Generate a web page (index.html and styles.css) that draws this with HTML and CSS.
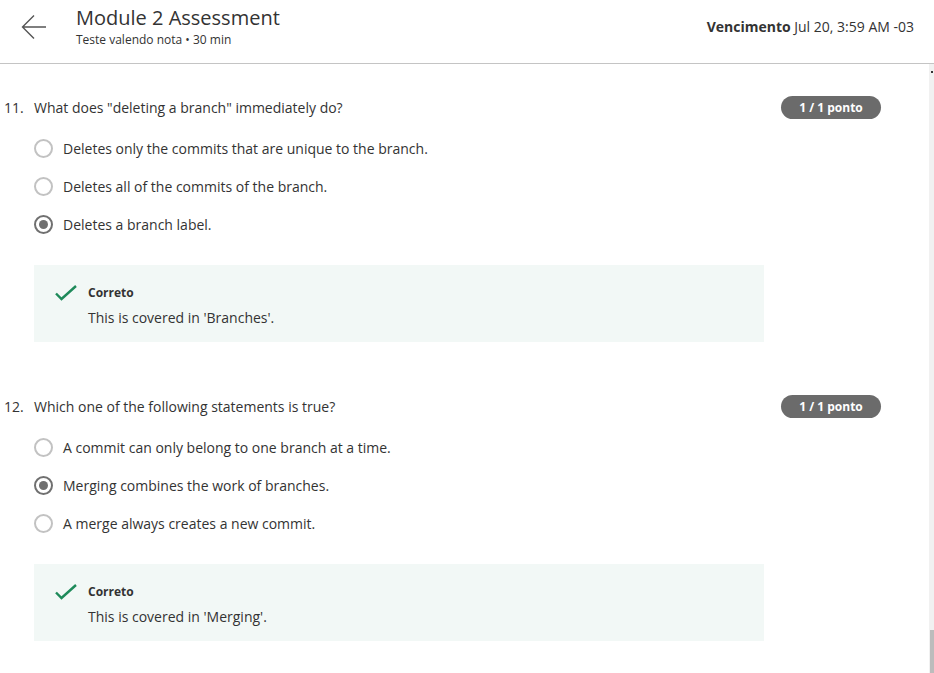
FILE: index.html
```html
<!DOCTYPE html>
<html lang="pt">
<head>
<meta charset="utf-8">
<title>Module 2 Assessment</title>
<link rel="stylesheet" href="styles.css">
</head>
<body>
<header class="topbar">
  <button class="back" aria-label="Voltar">
    <svg width="26" height="26" viewBox="0 0 26 26"><path d="M25 13H2M13 1.5L1.5 13L13 24.5" fill="none" stroke="#555" stroke-width="1.4"/></svg>
  </button>
  <div class="titles">
    <h1 class="title">Module 2 Assessment</h1>
    <div class="subtitle">Teste valendo nota • 30 min</div>
  </div>
  <div class="due"><b>Vencimento</b> Jul 20, 3:59 AM -03</div>
</header>
<div class="body">
  <main class="content">
    <section class="question">
      <div class="qrow">
        <span class="qnum">11.</span>
        <span class="qtext">What does "deleting a branch" immediately do?</span>
        <span class="badge">1 / 1 ponto</span>
      </div>
      <ul class="options">
        <li class="option"><span class="radio"></span>Deletes only the commits that are unique to the branch.</li>
        <li class="option"><span class="radio"></span>Deletes all of the commits of the branch.</li>
        <li class="option"><span class="radio checked"></span>Deletes a branch label.</li>
      </ul>
      <div class="feedback">
        <svg class="check" width="22" height="16" viewBox="0 0 22 16"><path d="M1 8.5L6.5 14L21 1" fill="none" stroke="#1e8a5a" stroke-width="2.4"/></svg>
        <div>
          <div class="fb-title">Correto</div>
          <div class="fb-text">This is covered in 'Branches'.</div>
        </div>
      </div>
    </section>
    <section class="question">
      <div class="qrow">
        <span class="qnum">12.</span>
        <span class="qtext">Which one of the following statements is true?</span>
        <span class="badge">1 / 1 ponto</span>
      </div>
      <ul class="options">
        <li class="option"><span class="radio"></span>A commit can only belong to one branch at a time.</li>
        <li class="option"><span class="radio checked"></span>Merging combines the work of branches.</li>
        <li class="option"><span class="radio"></span>A merge always creates a new commit.</li>
      </ul>
      <div class="feedback">
        <svg class="check" width="22" height="16" viewBox="0 0 22 16"><path d="M1 8.5L6.5 14L21 1" fill="none" stroke="#1e8a5a" stroke-width="2.4"/></svg>
        <div>
          <div class="fb-title">Correto</div>
          <div class="fb-text">This is covered in 'Merging'.</div>
        </div>
      </div>
    </section>
  </main>
  <div class="scrollbar"><span class="dot"></span><span class="thumb"></span></div>
</div>
</body>
</html>
```
FILE: styles.css
```css
* { box-sizing: border-box; }
html, body { margin: 0; padding: 0; height: 100%; overflow: hidden; }
body {
  font-family: "Open Sans", "Noto Sans", sans-serif;
  color: #333;
  background: #fff;
  display: flex;
  flex-direction: column;
}
.topbar {
  height: 64px;
  border-bottom: 1px solid #c4c4c4;
  display: flex;
  align-items: flex-start;
  flex-shrink: 0;
}
.back {
  border: 0;
  background: none;
  padding: 0;
  margin: 14px 0 0 21px;
  width: 26px;
  height: 26px;
  display: flex;
}
.titles { margin-left: 29px; padding-top: 5px; }
.title {
  margin: 0;
  font-size: 20px;
  font-weight: 400;
  line-height: 26px;
  color: #333;
}
.subtitle { font-size: 12px; line-height: 17px; color: #333; margin-top: 0px; }
.due {
  margin-left: auto;
  margin-right: 20px;
  margin-top: 17px;
  font-size: 14px;
  line-height: 20px;
  color: #333;
}
.due b { font-weight: 700; }
.body { flex: 1; display: flex; min-height: 0; }
.content { flex: 1; padding: 32px 48px 0 4px; }
.question { margin-bottom: 53px; }
.qrow { display: flex; align-items: center; height: 23px; font-size: 14px; }
.qnum { width: 30px; }
.qtext { flex: 1; }
.badge {
  width: 100px;
  height: 23px;
  border-radius: 12px;
  background: #6b6b6b;
  color: #fff;
  font-size: 12px;
  font-weight: 700;
  display: flex;
  align-items: center;
  justify-content: center;
}
.options { list-style: none; margin: 10px 0 0 30px; padding: 0; }
.option {
  height: 38px;
  display: flex;
  align-items: center;
  font-size: 14px;
}
.radio {
  width: 19px;
  height: 19px;
  border-radius: 50%;
  border: 2px solid #c2c2c2;
  margin-right: 10px;
  display: flex;
  align-items: center;
  justify-content: center;
  flex-shrink: 0;
}
.radio.checked { border-color: #707070; }
.radio.checked::after {
  content: "";
  width: 9px;
  height: 9px;
  border-radius: 50%;
  background: #707070;
}
.feedback {
  margin: 22px 0 0 30px;
  width: 730px;
  height: 77px;
  background: #f2f8f6;
  display: flex;
  align-items: flex-start;
  padding: 18px 20px 0 21px;
}
.check { margin-top: 2px; margin-right: 11px; flex-shrink: 0; }
.fb-title { font-size: 12px; font-weight: 700; line-height: 20px; color: #333; }
.fb-text { font-size: 14px; line-height: 20px; margin-top: 5px; }
.scrollbar {
  width: 5px;
  background: #f1f1f1;
  display: flex;
  flex-direction: column;
  align-items: flex-end;
  flex-shrink: 0;
}
.dot { width: 2px; height: 2px; background: #333; margin-top: 7px; margin-right: 1px; }
.thumb { margin-top: auto; width: 4px; height: 43px; background: #bcbcbc; }
```
